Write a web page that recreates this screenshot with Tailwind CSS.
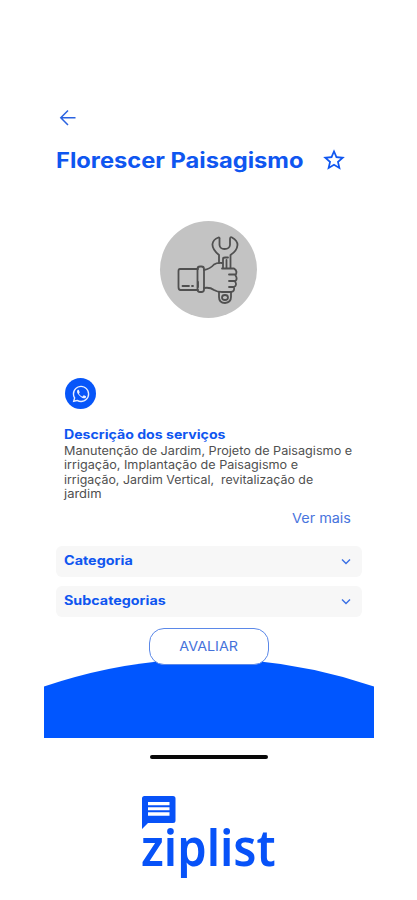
<!DOCTYPE html>
<html lang="pt-BR">
<head>
<meta charset="utf-8">
<meta name="viewport" content="width=device-width">
<title>Florescer Paisagismo</title>
<script src="https://cdn.jsdelivr.net/npm/@tailwindcss/browser@4"></script>
</head>
<body class="bg-white font-['Inter',sans-serif] text-[#0f56f0]">
<div class="w-[417px] h-[900px] overflow-hidden flex flex-col">
  <main class="ml-[44px] w-[330px] h-[738px] pt-[108px] flex flex-col">
    <button class="ml-[14px] w-5 h-5 shrink-0" aria-label="Voltar">
      <svg class="w-5 h-5" viewBox="0 0 20 20" fill="none" stroke="#2b63e0" stroke-width="1.5"><path d="M17.5 9.700H3M10 2.500L2.800 9.700L10 17"/></svg>
    </button>
    <div class="mt-[17px] ml-[12px] h-[30px] shrink-0 flex items-center">
      <h1 class="w-[265px] pt-px text-[21px] leading-[30px] font-bold whitespace-nowrap origin-left scale-x-[1.127]">Florescer Paisagismo</h1>
      <svg class="w-[26px] h-[26px] shrink-0" viewBox="0 0 24 24" fill="#0f56f0"><path d="M22 9.240l-7.190-.62L12 2 9.190 8.630 2 9.240l5.460 4.730L5.820 21 12 17.270 18.180 21l-1.630-7.030L22 9.240zM12 15.400l-3.760 2.270 1-4.280-3.320-2.880 4.380-.38L12 6.100l1.710 4.040 4.380.38-3.320 2.880 1 4.280L12 15.400z"/></svg>
    </div>
    <div class="mt-[46px] ml-[116px] w-[97px] h-[97px] shrink-0 rounded-full bg-[#c3c3c3]">
      <svg class="w-[97px] h-[97px]" viewBox="0 0 97 97" fill="none" stroke="#505050" stroke-width="1.8" stroke-linejoin="round" stroke-linecap="round">
        <path d="M38 48H20Q18.500 48 18.500 50V66Q18.500 69 20.500 69H38M22.500 65H29M32 65H33"/>
        <rect x="37.500" y="45.500" width="6.500" height="25.500" rx="2.500"/><path d="M38 61V66"/>
        <path d="M44 49Q50 48 54 43.500Q57 41.500 62 42M44 67Q50 66 54 69Q57 71 62 71H71Q75 70.500 74 66Q77.500 64 75 60.500Q78 58 75.500 54.500Q78 50 74 47.500H62M69 53.500H75M69 60H75M69 66H74"/>
        <path d="M59 42V34Q52 28 52.500 23Q53 18.500 58.500 16.500Q60 16.500 59.500 18V24Q60 28 64.500 28Q69.500 28 70 24V18Q70 15.500 72 16.500Q77.500 19.500 77.500 24Q77 30 70.500 34V47M63 47V38Q63 36.500 65 36.500H68M66.500 39V47"/>
        <path d="M59 71V76Q59 82 65 82Q71 81.500 71 76V71M65 74Q68 74 68 76.500T65 79Q62 79 62 76.500T65 74"/>
      </svg>
    </div>
    <div class="mt-[60px] ml-[21px] w-[31px] h-[31px] shrink-0 rounded-full bg-[#0756f9] flex items-center justify-center">
      <svg class="w-[20px] h-[20px]" viewBox="0 0 24 24" fill="#e8efff"><path d="M12.040 2C6.580 2 2.130 6.450 2.130 11.910c0 1.750.46 3.450 1.320 4.950L2.050 22l5.250-1.380a9.900 9.900 0 0 0 4.740 1.210c5.460 0 9.910-4.450 9.910-9.910S17.500 2 12.040 2zm0 18.150a8.200 8.200 0 0 1-4.190-1.150l-.3-.18-3.120.82.83-3.040-.2-.31a8.200 8.200 0 0 1-1.260-4.380 8.240 8.240 0 1 1 8.240 8.240zM8.530 6.800c-.4 0-1.300.6-1.300 2.100s1.100 3 1.250 3.200c.15.2 2.100 3.400 5.200 4.600 2.500 1 3.600.2 4-.3.4-.5.500-1.400.3-1.600l-2.400-1.200c-.4-.1-.6.1-.8.4l-.7.9c-.2.300-.5.200-.8.100-1.800-.8-2.900-1.900-3.700-3.300-.2-.3 0-.5.200-.7l.6-.9c.1-.2 0-.4-.1-.6l-.9-2.200c-.2-.5-.4-.5-.85-.5z"/></svg>
    </div>
    <section class="mt-[18px] ml-[19.500px] h-[100px] shrink-0">
      <h2 class="text-[12.500px] leading-[16px] font-bold whitespace-nowrap origin-left scale-x-[1.13]">Descrição dos serviços</h2>
      <div class="pt-[0.600px] text-[11.500px] leading-[14.500px] text-[#505050]">
        <p class="whitespace-pre origin-left scale-x-[1.1]">Manutenção de Jardim, Projeto de Paisagismo e</p>
        <p class="whitespace-pre origin-left scale-x-[1.097]">irrigação, Implantação de Paisagismo e</p>
        <p class="whitespace-pre origin-left scale-x-[1.077]">irrigação, Jardim Vertical,  revitalização de</p>
        <p class="whitespace-pre origin-left scale-x-[1.13]">jardim</p>
      </div>
      <a class="block mt-[7px] ml-[228px] text-[13px] leading-[18px] whitespace-nowrap text-[#4875dd] origin-left scale-x-[1.11]">Ver mais</a>
    </section>
    <div class="mt-[19px] ml-[12px] w-[306px] shrink-0 flex flex-col gap-[9px] text-[12.500px] font-bold">
      <div class="h-[31px] rounded-md bg-[#f7f7f7] pl-2 pr-[10px] flex items-center justify-between">
        <span class="origin-left scale-x-[1.15]">Categoria</span>
        <svg class="w-3 h-3" viewBox="0 0 12 12" fill="none" stroke="#3b70e5" stroke-width="1.400"><path d="M2 3.500L6 7.500L10 3.500"/></svg>
      </div>
      <div class="h-[31px] rounded-md bg-[#f7f7f7] pl-2 pr-[10px] flex items-center justify-between">
        <span class="origin-left scale-x-[1.145]">Subcategorias</span>
        <svg class="w-3 h-3" viewBox="0 0 12 12" fill="none" stroke="#3b70e5" stroke-width="1.400"><path d="M2 3.500L6 7.500L10 3.500"/></svg>
      </div>
    </div>
    <button class="relative z-10 mt-[11px] ml-[104.500px] w-[120px] h-[37px] shrink-0 rounded-[15px] border border-[#5b88e8] bg-white text-[13.500px] text-[#4572da] flex items-center justify-center"><span class="scale-x-[1.060]">AVALIAR</span></button>
    <svg class="-mt-[5px] w-[330px] h-[78px] shrink-0" viewBox="0 0 330 78" fill="#0056ff"><path d="M0 26.500Q165 -29 330 26.500V78H0Z"/></svg>
  </main>
  <div class="mt-[17px] ml-[150px] w-[118px] h-[4px] shrink-0 rounded-full bg-[#080808]"></div>
  <footer class="mt-[37px] ml-[142px]">
    <svg class="w-[34px] h-[34px]" viewBox="0 0 34 34" fill="#0752f8"><path fill-rule="evenodd" d="M2.500 0H31Q33.500 0 33.500 2.500V24.500Q33.500 27 31 27H6L0 33V2.500Q0 0 2.500 0ZM6 6V9.300H27.500V6ZM6 11.300V14.300H27.500V11.300ZM6 16.300V19.800H27.500V16.300Z"/></svg>
    <div class="-mt-[17px] -ml-[1px] font-['Noto_Sans',sans-serif] text-[50px] leading-[68px] font-semibold text-[#0752f8] origin-left scale-x-[0.943]">ziplist</div>
  </footer>
</div>
</body>
</html>
